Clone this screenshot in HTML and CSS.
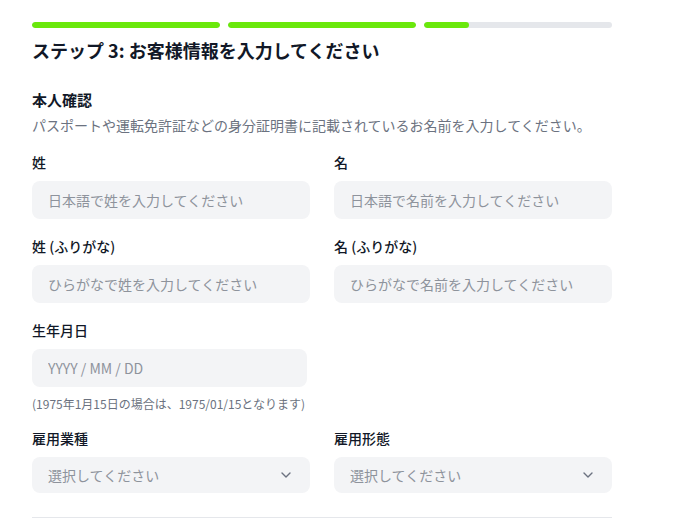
FILE: index.html
```html
<!DOCTYPE html>
<html lang="ja">
<head>
<meta charset="utf-8">
<title>ステップ 3</title>
<link rel="stylesheet" href="styles.css">
</head>
<body>
<main class="page">
  <div class="progress">
    <div class="track"><div class="fill" style="width:100%"></div></div>
    <div class="track"><div class="fill" style="width:100%"></div></div>
    <div class="track"><div class="fill" style="width:24%"></div></div>
  </div>
  <h1 class="title">ステップ 3: お客様情報を入力してください</h1>

  <h2 class="section">本人確認</h2>
  <p class="desc">パスポートや運転免許証などの身分証明書に記載されているお名前を入力してください。</p>

  <div class="grid">
    <div class="field">
      <label class="label">姓</label>
      <input class="input" type="text" placeholder="日本語で姓を入力してください">
    </div>
    <div class="field">
      <label class="label">名</label>
      <input class="input" type="text" placeholder="日本語で名前を入力してください">
    </div>
    <div class="field">
      <label class="label">姓 (ふりがな)</label>
      <input class="input" type="text" placeholder="ひらがなで姓を入力してください">
    </div>
    <div class="field">
      <label class="label">名 (ふりがな)</label>
      <input class="input" type="text" placeholder="ひらがなで名前を入力してください">
    </div>
    <div class="field">
      <label class="label">生年月日</label>
      <input class="input date" type="text" placeholder="YYYY / MM / DD">
      <p class="hint">(1975年1月15日の場合は、1975/01/15となります)</p>
    </div>
    <div class="field"></div>
    <div class="field">
      <label class="label">雇用業種</label>
      <div class="select"><span>選択してください</span>
        <svg width="10" height="6" viewBox="0 0 10 6"><path d="M1 1l4 4 4-4" fill="none" stroke="#6b7280" stroke-width="1.4" stroke-linecap="round" stroke-linejoin="round"/></svg>
      </div>
    </div>
    <div class="field">
      <label class="label">雇用形態</label>
      <div class="select"><span>選択してください</span>
        <svg width="10" height="6" viewBox="0 0 10 6"><path d="M1 1l4 4 4-4" fill="none" stroke="#6b7280" stroke-width="1.4" stroke-linecap="round" stroke-linejoin="round"/></svg>
      </div>
    </div>
  </div>
  <div class="divider"></div>
</main>
</body>
</html>
```
FILE: styles.css
```css
* { box-sizing: border-box; }
html, body { margin: 0; padding: 0; background: #ffffff; }
body {
  font-family: "Noto Sans CJK JP", "Noto Sans", sans-serif;
  color: #111827;
}
.page {
  width: 580px;
  margin-left: 32px;
  padding-top: 22px;
}
.progress {
  display: flex;
  gap: 8px;
}
.track {
  flex: 1;
  height: 6px;
  border-radius: 3px;
  background: #e5e7eb;
  overflow: hidden;
}
.fill {
  height: 100%;
  background: #6ae80c;
  border-radius: 3px;
}
.title {
  margin: 8px 0 0;
  font-size: 18px;
  line-height: 28px;
  font-weight: 700;
  color: #111827;
}
.section {
  margin: 25px 0 0;
  font-size: 15px;
  line-height: 22px;
  font-weight: 700;
  color: #111827;
}
.desc {
  margin: 4px 0 0;
  font-size: 14px;
  line-height: 20px;
  color: #6b7280;
}
.grid {
  margin-top: 17px;
  display: grid;
  grid-template-columns: 1fr 1fr;
  column-gap: 24px;
  row-gap: 17px;
}
.field {
  display: flex;
  flex-direction: column;
}
.label {
  font-size: 14px;
  line-height: 20px;
  font-weight: 500;
  color: #111827;
  margin-bottom: 9px;
}
.input {
  height: 38px;
  width: 100%;
  border: none;
  outline: none;
  border-radius: 8px;
  background: #f3f4f6;
  padding: 0 16px;
  font-family: inherit;
  font-size: 14px;
  color: #111827;
}
.input::placeholder { color: #8e939c; }
.input.date { width: 275px; }
.hint {
  margin: 8px 0 0;
  font-size: 12px;
  line-height: 18px;
  color: #6b7280;
}
.grid > .field:nth-child(7),
.grid > .field:nth-child(8) { margin-top: -2px; }
.select {
  height: 36px;
  border-radius: 8px;
  background: #f3f4f6;
  display: flex;
  align-items: center;
  justify-content: space-between;
  padding: 0 19px 0 16px;
  font-size: 14px;
  color: #8e939c;
}
.divider {
  margin-top: 24px;
  height: 1px;
  background: #e5e7eb;
}
```
